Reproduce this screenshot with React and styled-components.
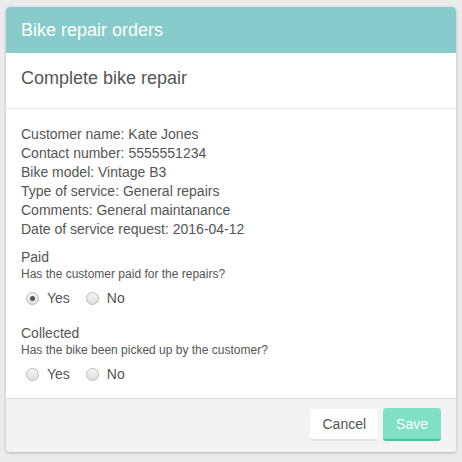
import React from "react";
import styled, { createGlobalStyle } from "styled-components";

const Global = createGlobalStyle`
  html, body { margin: 0; padding: 0; }
  body {
    background: #ebebeb;
    font-family: "Liberation Sans", Arial, sans-serif;
    color: #555;
  }
`;

const Page = styled.div`
  width: 462px;
  height: 462px;
  padding: 7px 6px 10px 6px;
  box-sizing: border-box;
`;

const Card = styled.div`
  width: 450px;
  height: 445px;
  background: #fff;
  border-radius: 4px;
  box-shadow: 0 1px 3px rgba(0, 0, 0, 0.25);
  display: flex;
  flex-direction: column;
  overflow: hidden;
`;

const Header = styled.div`
  height: 46px;
  background: #87cbca;
  color: #fff;
  font-size: 18px;
  line-height: 47px;
  padding: 0 15px;
  flex: none;
`;

const TitleBar = styled.div`
  height: 55px;
  border-bottom: 1px solid #e5e5e5;
  padding: 0 15px;
  font-size: 18px;
  line-height: 50px;
  color: #555;
  flex: none;
`;

const Body = styled.div`
  flex: 1;
  padding: 16px 15px 0 15px;
  font-size: 14px;
  line-height: 19px;
`;

const InfoLine = styled.div``;

const Group = styled.div`
  margin-top: ${(p) => p.$gap}px;
`;

const Label = styled.div`
  font-size: 14px;
  line-height: 19px;
`;

const Help = styled.div`
  font-size: 12px;
  line-height: 15px;
`;

const RadioRow = styled.div`
  display: flex;
  align-items: center;
  gap: 16px;
  margin-top: 6px;
  padding-left: 5px;
  height: 20px;
`;

const RadioOption = styled.label`
  display: flex;
  align-items: center;
  gap: 8px;
  font-size: 14px;
`;

const RadioCircle = styled.span`
  width: 11px;
  height: 11px;
  border-radius: 50%;
  border: 1px solid #b9b9b9;
  background: linear-gradient(#f6f6f6, #dedede);
  display: flex;
  align-items: center;
  justify-content: center;
  box-sizing: content-box;
  &::after {
    content: "";
    width: 5px;
    height: 5px;
    border-radius: 50%;
    background: #555;
    display: ${(p) => (p.$checked ? "block" : "none")};
  }
`;

const Footer = styled.div`
  height: 54px;
  background: #f3f3f3;
  border-top: 1px solid #ddd;
  display: flex;
  align-items: center;
  justify-content: flex-end;
  gap: 5px;
  padding: 0 15px 2px 0;
  box-sizing: border-box;
  flex: none;
`;

const Button = styled.button`
  font-family: "Liberation Sans", Arial, sans-serif;
  font-size: 14px;
  height: ${(p) => (p.$primary ? 33 : 32)}px;
  padding: 0 ${(p) => (p.$primary ? 13 : 12)}px;
  border: none;
  border-radius: 3px;
  cursor: pointer;
  background: ${(p) => (p.$primary ? "#7fe0c4" : "#fff")};
  color: ${(p) => (p.$primary ? "#fff" : "#555")};
  border-bottom: 2px solid ${(p) => (p.$primary ? "#3dcb9c" : "#e3e3e3")};
`;

function Radio({ checked, label }) {
  return (
    <RadioOption>
      <RadioCircle $checked={checked} />
      {label}
    </RadioOption>
  );
}

export default function App() {
  const info = [
    "Customer name: Kate Jones",
    "Contact number: 5555551234",
    "Bike model: Vintage B3",
    "Type of service: General repairs",
    "Comments: General maintanance",
    "Date of service request: 2016-04-12",
  ];
  return (
    <>
      <Global />
      <Page>
        <Card>
          <Header>Bike repair orders</Header>
          <TitleBar>Complete bike repair</TitleBar>
          <Body>
            {info.map((t) => (
              <InfoLine key={t}>{t}</InfoLine>
            ))}
            <Group $gap={9}>
              <Label>Paid</Label>
              <Help>Has the customer paid for the repairs?</Help>
              <RadioRow>
                <Radio checked label="Yes" />
                <Radio label="No" />
              </RadioRow>
            </Group>
            <Group $gap={16}>
              <Label>Collected</Label>
              <Help>Has the bike been picked up by the customer?</Help>
              <RadioRow>
                <Radio label="Yes" />
                <Radio label="No" />
              </RadioRow>
            </Group>
          </Body>
          <Footer>
            <Button>Cancel</Button>
            <Button $primary>Save</Button>
          </Footer>
        </Card>
      </Page>
    </>
  );
}
